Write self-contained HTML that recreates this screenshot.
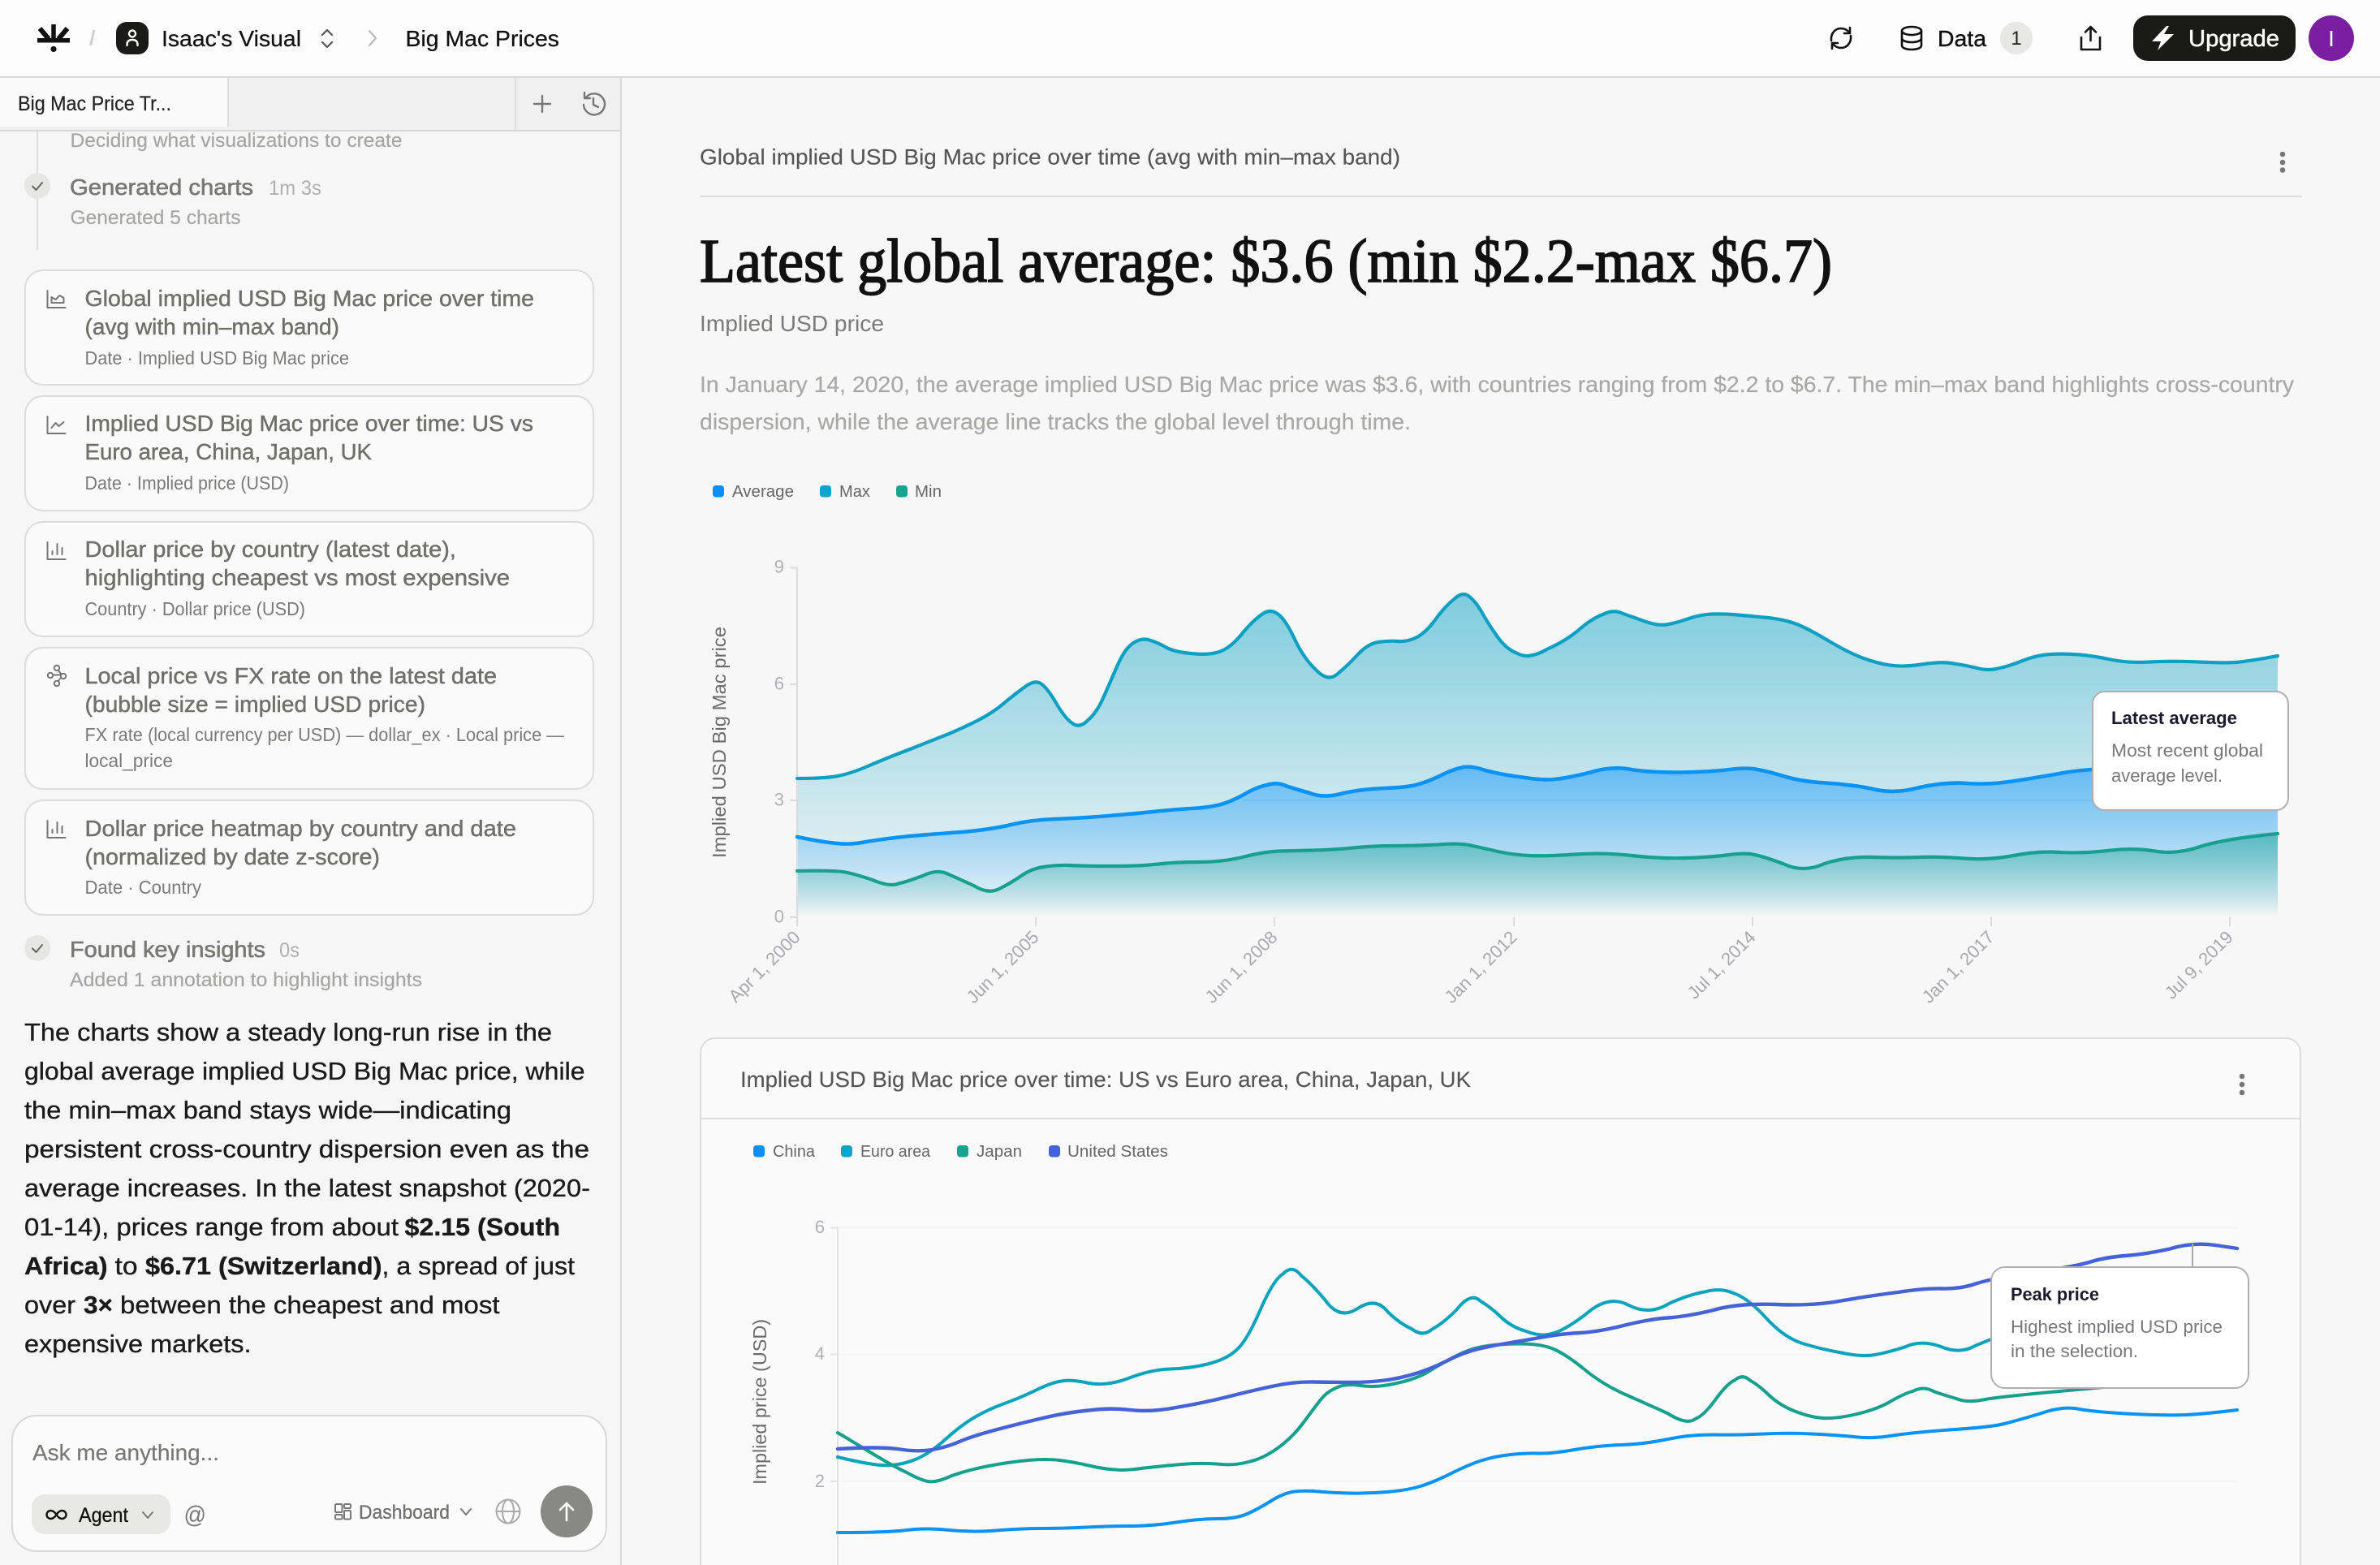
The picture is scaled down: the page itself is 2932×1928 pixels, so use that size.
<!DOCTYPE html>
<html lang="en">
<head>
<meta charset="utf-8">
<title>Big Mac Prices</title>
<style>
html,body{margin:0;padding:0;background:#f7f7f7;width:2932px;height:1928px;overflow:hidden}
svg{display:block}
text{font-family:"Liberation Sans",Arial,sans-serif;white-space:pre}
.serif{font-family:"Liberation Serif","Times New Roman",serif}
.ic{fill:none;stroke-linecap:round;stroke-linejoin:round}
</style>
</head>
<body>
<svg xmlns="http://www.w3.org/2000/svg" width="2932" height="1928" viewBox="0 0 2932 1928">
<defs>
<linearGradient id="gMax" x1="0" y1="0" x2="0" y2="1"><stop offset="0" stop-color="#06a0c4" stop-opacity=".5"/><stop offset="1" stop-color="#06a0c4" stop-opacity="0"/></linearGradient>
<linearGradient id="gAvg" x1="0" y1="0" x2="0" y2="1"><stop offset="0" stop-color="#0090ff" stop-opacity=".48"/><stop offset="1" stop-color="#0090ff" stop-opacity="0"/></linearGradient>
<linearGradient id="gMin" x1="0" y1="0" x2="0" y2="1"><stop offset="0" stop-color="#15a08f" stop-opacity=".5"/><stop offset="1" stop-color="#15a08f" stop-opacity="0"/></linearGradient>
</defs>

<rect width="2932" height="1928" fill="#f7f7f7"/>

<!-- top bar -->
<g id="topbar">
<rect width="2932" height="95" fill="#fcfcfc"/>
<rect y="94" width="2932" height="2" fill="#d8d8d8"/>
<!-- logo -->
<rect x="46" y="47" width="40" height="5.5" fill="#111"/>
<path d="M66 48V30" stroke="#111" stroke-width="5.5" fill="none"/>
<path d="M60 48L49 35" stroke="#111" stroke-width="6" fill="none"/>
<path d="M72 48L83 35" stroke="#111" stroke-width="6" fill="none"/>
<circle cx="66" cy="60.5" r="3.6" fill="#111"/>
<path d="M115.7 37L111.7 56" stroke="#cfcfcf" stroke-width="3" fill="none"/>
<rect x="143" y="27" width="40" height="40" rx="13" fill="#1a1a18"/>
<circle cx="163" cy="41.5" r="4" fill="none" stroke="#fff" stroke-width="2.4"/>
<path class="ic" d="M156.5 56V54.5C156.5 51 159 49 163 49C167 49 169.5 51 169.5 54.5V56" stroke="#fff" stroke-width="2.4"/>
<text x="199" y="57" font-size="28" fill="#111" stroke="#111" stroke-width=".25" textLength="172" lengthAdjust="spacingAndGlyphs">Isaac's Visual</text>
<path class="ic" d="M397 43L403 37L409 43M397 52L403 58L409 52" stroke="#555" stroke-width="2.2"/>
<path class="ic" d="M455 38L463 47L455 56" stroke="#bbb" stroke-width="2.2"/>
<text x="499.5" y="57" font-size="28" fill="#111" stroke="#111" stroke-width=".25" textLength="189.5" lengthAdjust="spacingAndGlyphs">Big Mac Prices</text>

<path class="ic" d="M2256 50C2255 41 2261 35 2268 35C2273 35 2276 37 2279 41M2279 34V41H2272" stroke="#111" stroke-width="2.6"/>
<path class="ic" d="M2280 44C2281 53 2275 59 2268 59C2263 59 2260 57 2257 53M2257 60V53H2264" stroke="#111" stroke-width="2.6"/>
<ellipse cx="2355" cy="38" rx="12" ry="5" fill="none" stroke="#111" stroke-width="2.6"/>
<path class="ic" d="M2343 38V56C2343 59 2348 61 2355 61C2362 61 2367 59 2367 56V38M2343 47C2343 50 2348 52 2355 52C2362 52 2367 50 2367 47" stroke="#111" stroke-width="2.6"/>
<text x="2387" y="57" font-size="28" fill="#111" stroke="#111" stroke-width=".4" textLength="60" lengthAdjust="spacingAndGlyphs">Data</text>
<circle cx="2484" cy="47" r="20" fill="#e7e7e5"/>
<text x="2484" y="55" font-size="24" fill="#222" text-anchor="middle">1</text>
<path class="ic" d="M2564 46V61H2587V46M2575.5 50V33M2569 39.5L2575.5 33L2582 39.5" stroke="#111" stroke-width="2.6"/>
<rect x="2628" y="19" width="200" height="56" rx="18" fill="#1a1a18"/>
<path d="M2669 32L2651 51H2662L2658 62L2678 42H2666L2672 32Z" fill="#fff"/>
<text x="2696" y="57" font-size="29" fill="#fff" stroke="#fff" stroke-width=".5" textLength="112" lengthAdjust="spacingAndGlyphs">Upgrade</text>
<circle cx="2872" cy="47" r="28" fill="#7b1fa2"/>
<text x="2872" y="57" font-size="28" fill="#fff" text-anchor="middle">I</text>
</g>

<!-- sidebar -->
<g id="sidebar">
<rect y="96" width="765" height="1832" fill="#f6f6f6"/>
<rect x="764" y="96" width="2" height="1832" fill="#d8d8d8"/>
<rect y="96" width="764" height="65" fill="#f0f0f0"/>
<rect y="96" width="280" height="60" fill="#fafafa"/>
<rect x="280" y="96" width="2" height="60" fill="#dedede"/>
<rect x="634" y="96" width="2" height="65" fill="#dcdcdc"/>
<rect y="160" width="764" height="2" fill="#d8d8d8"/>
<text x="22" y="136" font-size="25" fill="#222" stroke="#222" stroke-width=".2" textLength="189" lengthAdjust="spacingAndGlyphs">Big Mac Price Tr...</text>
<path class="ic" d="M668 118V138M658 128H678" stroke="#777" stroke-width="2.4"/>
<path class="ic" d="M722 120A13 13 0 1 1 719 129M720 114V121H727M731 121V129L737 132" stroke="#777" stroke-width="2.4"/>

<rect x="45" y="162" width="2" height="146" fill="#dcdcdc"/>
<text x="86.5" y="181" font-size="24" fill="#a5a5a3" stroke="#a5a5a3" stroke-width=".2" textLength="409" lengthAdjust="spacingAndGlyphs">Deciding what visualizations to create</text>
<circle cx="46" cy="229" r="16" fill="#e6e6e4"/>
<path class="ic" d="M40 229.5L44.5 234L52 225" stroke="#666" stroke-width="2"/>
<text x="86" y="240" font-size="28" fill="#777775" stroke="#777775" stroke-width=".6" textLength="226" lengthAdjust="spacingAndGlyphs">Generated charts</text>
<text x="331" y="240" font-size="25" fill="#b0b0ae" textLength="65" lengthAdjust="spacingAndGlyphs">1m 3s</text>
<text x="86.5" y="276" font-size="24" fill="#a5a5a3" stroke="#a5a5a3" stroke-width=".2" textLength="210" lengthAdjust="spacingAndGlyphs">Generated 5 charts</text>

<g fill="#fafafa" stroke="#dcdcdc" stroke-width="2">
<rect x="31" y="333" width="700" height="141" rx="22"/>
<rect x="31" y="488" width="700" height="141" rx="22"/>
<rect x="31" y="643" width="700" height="141" rx="22"/>
<rect x="31" y="798" width="700" height="174" rx="22"/>
<rect x="31" y="986" width="700" height="141" rx="22"/>
</g>

<path class="ic" d="M58.5 358V379H80.5M63.5 373V366L68.5 369L73.5 364L78.5 367V373Z" stroke="#777" stroke-width="2"/>
<path class="ic" d="M58.5 513V534H80.5M63.5 527L68.5 521L72.5 525L78.5 520" stroke="#777" stroke-width="2"/>
<path class="ic" d="M58.5 668V689H80.5M64.5 683V679M70.5 683V670M76.5 683V675" stroke="#777" stroke-width="2"/>
<g class="ic" stroke="#777" stroke-width="2"><circle cx="70" cy="823" r="3.2"/><circle cx="62" cy="832" r="3.2"/><circle cx="78" cy="833" r="3.2"/><circle cx="70" cy="842" r="3.2"/><path d="M65.5 831.5H74M72 826L75 830M74 836L72 839"/></g>
<path class="ic" d="M58.5 1011V1032H80.5M64.5 1026V1022M70.5 1026V1013M76.5 1026V1018" stroke="#777" stroke-width="2"/>

<g font-size="28" fill="#6f6f6c" stroke="#6f6f6c" stroke-width=".45">
<text x="104.5" y="377" textLength="553.5" lengthAdjust="spacingAndGlyphs">Global implied USD Big Mac price over time</text>
<text x="104.5" y="412" textLength="313.5" lengthAdjust="spacingAndGlyphs">(avg with min–max band)</text>
<text x="104.5" y="531" textLength="552.5" lengthAdjust="spacingAndGlyphs">Implied USD Big Mac price over time: US vs</text>
<text x="104.5" y="566" textLength="353.5" lengthAdjust="spacingAndGlyphs">Euro area, China, Japan, UK</text>
<text x="104.5" y="686" textLength="457.5" lengthAdjust="spacingAndGlyphs">Dollar price by country (latest date),</text>
<text x="104.5" y="721" textLength="523.5" lengthAdjust="spacingAndGlyphs">highlighting cheapest vs most expensive</text>
<text x="104.5" y="842" textLength="507.5" lengthAdjust="spacingAndGlyphs">Local price vs FX rate on the latest date</text>
<text x="104.5" y="877" textLength="419.5" lengthAdjust="spacingAndGlyphs">(bubble size = implied USD price)</text>
<text x="104.5" y="1030" textLength="531.5" lengthAdjust="spacingAndGlyphs">Dollar price heatmap by country and date</text>
<text x="104.5" y="1065" textLength="363.5" lengthAdjust="spacingAndGlyphs">(normalized by date z-score)</text>
</g>
<g font-size="23" fill="#7a7a78">
<text x="104.5" y="449" textLength="325.5" lengthAdjust="spacingAndGlyphs">Date · Implied USD Big Mac price</text>
<text x="104.5" y="603" textLength="251.5" lengthAdjust="spacingAndGlyphs">Date · Implied price (USD)</text>
<text x="104.5" y="758" textLength="271.5" lengthAdjust="spacingAndGlyphs">Country · Dollar price (USD)</text>
<text x="104.5" y="913" textLength="590.5" lengthAdjust="spacingAndGlyphs">FX rate (local currency per USD) — dollar_ex · Local price —</text>
<text x="104.5" y="945" textLength="108.5" lengthAdjust="spacingAndGlyphs">local_price</text>
<text x="104.5" y="1101" textLength="143.5" lengthAdjust="spacingAndGlyphs">Date · Country</text>
</g>

<circle cx="46" cy="1168" r="16" fill="#e6e6e4"/>
<path class="ic" d="M40 1168.5L44.5 1173L52 1164" stroke="#666" stroke-width="2"/>
<text x="86" y="1179" font-size="28" fill="#777775" stroke="#777775" stroke-width=".6" textLength="241" lengthAdjust="spacingAndGlyphs">Found key insights</text>
<text x="344" y="1179" font-size="25" fill="#b0b0ae" textLength="25" lengthAdjust="spacingAndGlyphs">0s</text>
<text x="86" y="1215" font-size="24" fill="#a5a5a3" stroke="#a5a5a3" stroke-width=".2" textLength="434" lengthAdjust="spacingAndGlyphs">Added 1 annotation to highlight insights</text>

<g font-size="31" fill="#1a1a1a" stroke="#1a1a1a" stroke-width=".35">
<text x="30" y="1282" textLength="650" lengthAdjust="spacingAndGlyphs">The charts show a steady long-run rise in the</text>
<text x="30" y="1330" textLength="690.5" lengthAdjust="spacingAndGlyphs">global average implied USD Big Mac price, while</text>
<text x="30" y="1378" textLength="600" lengthAdjust="spacingAndGlyphs">the min–max band stays wide—indicating</text>
<text x="30" y="1426" textLength="696" lengthAdjust="spacingAndGlyphs">persistent cross-country dispersion even as the</text>
<text x="30" y="1474" textLength="697" lengthAdjust="spacingAndGlyphs">average increases. In the latest snapshot (2020-</text>
<text x="30" y="1522" textLength="461" lengthAdjust="spacingAndGlyphs">01-14), prices range from about</text>
<text x="498.5" y="1522" font-weight="700" textLength="191.5" lengthAdjust="spacingAndGlyphs">$2.15 (South</text>
<text x="30" y="1570" font-weight="700" textLength="102.5" lengthAdjust="spacingAndGlyphs">Africa)</text>
<text x="141.5" y="1570" textLength="28" lengthAdjust="spacingAndGlyphs">to</text>
<text x="179" y="1570" font-weight="700" textLength="291.5" lengthAdjust="spacingAndGlyphs">$6.71 (Switzerland)</text>
<text x="470.5" y="1570" textLength="237.5" lengthAdjust="spacingAndGlyphs">, a spread of just</text>
<text x="30" y="1618" textLength="63" lengthAdjust="spacingAndGlyphs">over</text>
<text x="103" y="1618" font-weight="700" textLength="36" lengthAdjust="spacingAndGlyphs">3×</text>
<text x="148" y="1618" textLength="467.5" lengthAdjust="spacingAndGlyphs">between the cheapest and most</text>
<text x="30" y="1666" textLength="279.5" lengthAdjust="spacingAndGlyphs">expensive markets.</text>
</g>

<!-- input -->
<rect x="15" y="1744" width="732" height="167" rx="30" fill="#fbfbfb" stroke="#d8d8d8" stroke-width="2"/>
<text x="40" y="1799" font-size="28" fill="#777775" stroke="#777775" stroke-width=".2" textLength="230" lengthAdjust="spacingAndGlyphs">Ask me anything...</text>
<rect x="39" y="1841" width="171" height="49" rx="16" fill="#e8e8e6"/>
<path class="ic" d="M69.5 1866C67 1862 64 1861 62.5 1861A5 5 0 0 0 62.5 1871C64 1871 67 1870 69.5 1866C72 1862 75 1861 76.5 1861A5 5 0 0 1 76.5 1871C75 1871 72 1870 69.5 1866Z" stroke="#111" stroke-width="2.4"/>
<text x="97" y="1875" font-size="25" fill="#111" stroke="#111" stroke-width=".3" textLength="61" lengthAdjust="spacingAndGlyphs">Agent</text>
<path class="ic" d="M176 1863L182 1870L188 1863" stroke="#777" stroke-width="2"/>
<text x="226.5" y="1876" font-size="30" fill="#777" textLength="27.5" lengthAdjust="spacingAndGlyphs">@</text>
<g fill="none" stroke="#777" stroke-width="2"><rect x="413" y="1853" width="8.5" height="10" rx="1.2"/><rect x="424" y="1853" width="8" height="5" rx="1.2"/><rect x="413" y="1866" width="8.5" height="5.5" rx="1.2"/><rect x="424" y="1861" width="8" height="10.5" rx="1.2"/></g>
<text x="442" y="1871" font-size="24" fill="#6f6f6d" stroke="#6f6f6d" stroke-width=".3" textLength="112" lengthAdjust="spacingAndGlyphs">Dashboard</text>
<path class="ic" d="M568 1859L574 1866L580 1859" stroke="#777" stroke-width="2"/>
<g fill="none" stroke="#aaa" stroke-width="2"><circle cx="626" cy="1862" r="14.5"/><ellipse cx="626" cy="1862" rx="7" ry="14.5"/><path d="M611.5 1862H640.5"/></g>
<circle cx="698" cy="1862" r="32" fill="#888886"/>
<path class="ic" d="M698 1873V1852M690 1860L698 1852L706 1860" stroke="#fff" stroke-width="2.6"/>
</g>

<!-- chart 1 -->
<g id="chart1">
<text x="862" y="202.5" font-size="27" fill="#555" stroke="#555" stroke-width=".15" textLength="863" lengthAdjust="spacingAndGlyphs">Global implied USD Big Mac price over time (avg with min–max band)</text>
<g fill="#777"><circle cx="2812" cy="190" r="3.3"/><circle cx="2812" cy="200" r="3.3"/><circle cx="2812" cy="209.5" r="3.3"/></g>
<rect x="862" y="241" width="1974" height="2" fill="#dcdcdc"/>
<text class="serif" x="862" y="347" font-size="76" fill="#111" stroke="#111" stroke-width="1.7" textLength="1395" lengthAdjust="spacingAndGlyphs">Latest global average: $3.6 (min $2.2-max $6.7)</text>
<text x="862" y="408" font-size="28" fill="#7a7a78" textLength="227" lengthAdjust="spacingAndGlyphs">Implied USD price</text>
<text x="862" y="483" font-size="27.5" fill="#a8a8a6" stroke="#a8a8a6" stroke-width=".2" textLength="1964" lengthAdjust="spacingAndGlyphs">In January 14, 2020, the average implied USD Big Mac price was $3.6, with countries ranging from $2.2 to $6.7. The min–max band highlights cross-country</text>
<text x="862" y="529" font-size="27.5" fill="#a8a8a6" stroke="#a8a8a6" stroke-width=".2" textLength="876" lengthAdjust="spacingAndGlyphs">dispersion, while the average line tracks the global level through time.</text>

<rect x="878" y="598" width="14" height="14.5" rx="4" fill="#0a8fff"/>
<text x="902" y="612" font-size="20" fill="#666" textLength="76" lengthAdjust="spacingAndGlyphs">Average</text>
<rect x="1010" y="598" width="14" height="14.5" rx="4" fill="#0ea5cc"/>
<text x="1034" y="612" font-size="20" fill="#666" textLength="38" lengthAdjust="spacingAndGlyphs">Max</text>
<rect x="1104" y="598" width="14" height="14.5" rx="4" fill="#18a38f"/>
<text x="1127" y="612" font-size="20" fill="#666" textLength="33" lengthAdjust="spacingAndGlyphs">Min</text>

<path fill="url(#gMax)" d="M982 959Q1016 959 1032 956Q1048 953 1070 943.5Q1092 934 1121 923Q1150 911.5 1169 904Q1188 896 1205.5 887Q1223 878 1236 867Q1249 856 1261.5 847Q1274 837 1282 842Q1290 847 1301 866Q1312 885 1321 891Q1330 898 1340.5 887Q1351 878 1359 860Q1367 842 1376.5 820Q1386 798 1397 791.5Q1408 785 1417.5 789Q1427 792 1436.5 797.5Q1446 803 1467 805Q1488 807.5 1502 803Q1516 798 1529 782Q1542 766 1553 758Q1564 749 1573.5 756Q1583 762 1594.5 786.5Q1606 811 1621 825Q1636 841 1648 830Q1660 820 1672.5 806.5Q1685 793 1698 791Q1711 789 1722 790Q1733 791 1744.5 785.5Q1756 780 1768.5 763Q1781 746 1791.5 738Q1802 728 1810 735Q1818 741 1826.5 756Q1835 771 1845.5 785.5Q1856 800 1869.5 805Q1883 813 1906.5 799.5Q1930 789 1945.5 775.5Q1961 762 1974.5 757Q1988 750 1999.5 756Q2011 760 2026.5 765.5Q2042 771 2052.5 769.5Q2063 768 2079 762.5Q2095 757 2109 756.5Q2123 756 2140.5 757.5Q2158 759 2177.5 761Q2197 763 2211 768Q2225 773 2251 788.5Q2277 804 2294.5 810.5Q2312 817 2328 819.5Q2344 822 2367 818.5Q2390 815 2404 817Q2418 819 2433.5 822.5Q2449 827 2461.5 823.5Q2474 821 2491.5 814Q2509 807 2526.5 806Q2544 805 2561.5 806.5Q2579 808 2600 812.5Q2621 817 2649 815.5Q2677 814 2708.5 815.5Q2740 817 2754 816Q2768 815 2806 808L2806 1130L982 1130Z"/>
<path fill="url(#gAvg)" d="M982 1031Q1016 1038 1032 1039Q1048 1041 1070 1036.5Q1092 1033 1121 1030Q1150 1027.5 1185 1025Q1220 1022 1245.5 1016Q1271 1010 1299.5 1009Q1328 1008 1360 1005.5Q1392 1003 1420.5 1000Q1449 997 1468.5 996Q1488 995 1502 991.5Q1516 988 1532 979Q1548 969.5 1561 967Q1574 963 1585 968.5Q1596 972 1613.5 977Q1631 984 1655 977Q1679 972 1706 971Q1733 970 1746 966.5Q1759 963 1773.5 956Q1788 948.5 1799 946Q1810 942 1831.5 949.5Q1853 955 1879 958Q1905 962 1919 959.5Q1933 958 1959.5 951.5Q1986 943 2012.5 948.5Q2039 952 2070.5 951.5Q2102 951 2126.5 948.5Q2151 945 2165 948Q2179 950.5 2200 957Q2221 963 2249 964.5Q2277 966 2305 971.5Q2333 979 2365 970Q2397 963 2423 965Q2449 967 2479 962.5Q2509 958 2537 953Q2565 947.5 2603.5 947Q2642 947 2724 945.5Q2765 944 2806 944L2806 1130L982 1130Z"/>
<path fill="url(#gMin)" d="M982 1073Q1029 1072 1041.5 1074.5Q1054 1077 1075 1084Q1096 1093 1107 1088.5Q1118 1086 1136.5 1079Q1155 1070 1168.5 1077Q1182 1083 1199.5 1091Q1217 1102 1231 1095Q1245 1088 1258 1079Q1271 1070 1285.5 1068Q1300 1065.5 1317.5 1066Q1335 1067 1370 1067Q1405 1067 1427 1064.5Q1449 1062 1478 1062Q1507 1062 1532.5 1055.5Q1558 1049 1577 1048.5Q1596 1048 1618.5 1047.5Q1641 1047 1666.5 1044.5Q1692 1042 1717.5 1042Q1743 1042 1771.5 1040.5Q1800 1038 1814 1042Q1828 1045 1845.5 1049Q1863 1053 1884 1054Q1905 1055 1940 1052.5Q1975 1050 2010.5 1054Q2046 1058 2074 1057Q2102 1056.5 2126.5 1053.5Q2151 1050 2161.5 1053Q2172 1055 2196.5 1064Q2221 1076 2247.5 1064Q2274 1055 2307 1056Q2340 1057 2365 1056Q2390 1055 2419.5 1057.5Q2449 1060 2480.5 1054Q2512 1048 2538.5 1050Q2565 1051.5 2596.5 1048Q2628 1044 2654.5 1048.5Q2681 1053 2710.5 1043Q2740 1033.5 2806 1027L2806 1130L982 1130Z"/>

<path d="M1368 843H2806" stroke="#8fd6de" stroke-opacity=".4" stroke-width="2" fill="none"/>
<path d="M1530 986H2806" stroke="#62bce8" stroke-opacity=".5" stroke-width="2" fill="none"/>
<path d="M982 699V1130M973 699.5H982M973 843H982M973 986H982M973 1130H982M982 1130V1141M1276 1130V1141M1570 1130V1141M1865 1130V1141M2159 1130V1141M2453 1130V1141M2747 1130V1141" stroke="#dcdcdc" stroke-width="2" fill="none"/>

<path fill="none" stroke="#0ea0c2" stroke-width="4.2" stroke-linecap="round" d="M982 959Q1016 959 1032 956Q1048 953 1070 943.5Q1092 934 1121 923Q1150 911.5 1169 904Q1188 896 1205.5 887Q1223 878 1236 867Q1249 856 1261.5 847Q1274 837 1282 842Q1290 847 1301 866Q1312 885 1321 891Q1330 898 1340.5 887Q1351 878 1359 860Q1367 842 1376.5 820Q1386 798 1397 791.5Q1408 785 1417.5 789Q1427 792 1436.5 797.5Q1446 803 1467 805Q1488 807.5 1502 803Q1516 798 1529 782Q1542 766 1553 758Q1564 749 1573.5 756Q1583 762 1594.5 786.5Q1606 811 1621 825Q1636 841 1648 830Q1660 820 1672.5 806.5Q1685 793 1698 791Q1711 789 1722 790Q1733 791 1744.5 785.5Q1756 780 1768.5 763Q1781 746 1791.5 738Q1802 728 1810 735Q1818 741 1826.5 756Q1835 771 1845.5 785.5Q1856 800 1869.5 805Q1883 813 1906.5 799.5Q1930 789 1945.5 775.5Q1961 762 1974.5 757Q1988 750 1999.5 756Q2011 760 2026.5 765.5Q2042 771 2052.5 769.5Q2063 768 2079 762.5Q2095 757 2109 756.5Q2123 756 2140.5 757.5Q2158 759 2177.5 761Q2197 763 2211 768Q2225 773 2251 788.5Q2277 804 2294.5 810.5Q2312 817 2328 819.5Q2344 822 2367 818.5Q2390 815 2404 817Q2418 819 2433.5 822.5Q2449 827 2461.5 823.5Q2474 821 2491.5 814Q2509 807 2526.5 806Q2544 805 2561.5 806.5Q2579 808 2600 812.5Q2621 817 2649 815.5Q2677 814 2708.5 815.5Q2740 817 2754 816Q2768 815 2806 808"/>
<path fill="none" stroke="#0a93f5" stroke-width="4.6" stroke-linecap="round" d="M982 1031Q1016 1038 1032 1039Q1048 1041 1070 1036.5Q1092 1033 1121 1030Q1150 1027.5 1185 1025Q1220 1022 1245.5 1016Q1271 1010 1299.5 1009Q1328 1008 1360 1005.5Q1392 1003 1420.5 1000Q1449 997 1468.5 996Q1488 995 1502 991.5Q1516 988 1532 979Q1548 969.5 1561 967Q1574 963 1585 968.5Q1596 972 1613.5 977Q1631 984 1655 977Q1679 972 1706 971Q1733 970 1746 966.5Q1759 963 1773.5 956Q1788 948.5 1799 946Q1810 942 1831.5 949.5Q1853 955 1879 958Q1905 962 1919 959.5Q1933 958 1959.5 951.5Q1986 943 2012.5 948.5Q2039 952 2070.5 951.5Q2102 951 2126.5 948.5Q2151 945 2165 948Q2179 950.5 2200 957Q2221 963 2249 964.5Q2277 966 2305 971.5Q2333 979 2365 970Q2397 963 2423 965Q2449 967 2479 962.5Q2509 958 2537 953Q2565 947.5 2603.5 947Q2642 947 2724 945.5Q2765 944 2806 944"/>
<path fill="none" stroke="#17a08e" stroke-width="4.2" stroke-linecap="round" d="M982 1073Q1029 1072 1041.5 1074.5Q1054 1077 1075 1084Q1096 1093 1107 1088.5Q1118 1086 1136.5 1079Q1155 1070 1168.5 1077Q1182 1083 1199.5 1091Q1217 1102 1231 1095Q1245 1088 1258 1079Q1271 1070 1285.5 1068Q1300 1065.5 1317.5 1066Q1335 1067 1370 1067Q1405 1067 1427 1064.5Q1449 1062 1478 1062Q1507 1062 1532.5 1055.5Q1558 1049 1577 1048.5Q1596 1048 1618.5 1047.5Q1641 1047 1666.5 1044.5Q1692 1042 1717.5 1042Q1743 1042 1771.5 1040.5Q1800 1038 1814 1042Q1828 1045 1845.5 1049Q1863 1053 1884 1054Q1905 1055 1940 1052.5Q1975 1050 2010.5 1054Q2046 1058 2074 1057Q2102 1056.5 2126.5 1053.5Q2151 1050 2161.5 1053Q2172 1055 2196.5 1064Q2221 1076 2247.5 1064Q2274 1055 2307 1056Q2340 1057 2365 1056Q2390 1055 2419.5 1057.5Q2449 1060 2480.5 1054Q2512 1048 2538.5 1050Q2565 1051.5 2596.5 1048Q2628 1044 2654.5 1048.5Q2681 1053 2710.5 1043Q2740 1033.5 2806 1027"/>

<g font-size="22" fill="#b0b0b4" text-anchor="end">
<text x="966" y="705.5">9</text><text x="966" y="849.5">6</text><text x="966" y="992.5">3</text><text x="966" y="1136.5">0</text>
</g>
<g font-size="22" fill="#a8a8ad" text-anchor="end">
<text transform="translate(987 1156) rotate(-45)">Apr 1, 2000</text>
<text transform="translate(1281 1156) rotate(-45)">Jun 1, 2005</text>
<text transform="translate(1575 1156) rotate(-45)">Jun 1, 2008</text>
<text transform="translate(1870 1156) rotate(-45)">Jan 1, 2012</text>
<text transform="translate(2164 1156) rotate(-45)">Jul 1, 2014</text>
<text transform="translate(2458 1156) rotate(-45)">Jan 1, 2017</text>
<text transform="translate(2752 1156) rotate(-45)">Jul 9, 2019</text>
</g>
<text transform="translate(894 1057) rotate(-90)" font-size="23" fill="#6b6b6b" textLength="285" lengthAdjust="spacingAndGlyphs">Implied USD Big Mac price</text>

<rect x="2578" y="852" width="241" height="146" rx="15" fill="#fff" stroke="#b0b0b0" stroke-width="2"/>
<text x="2601" y="892" font-size="22" fill="#1a1a2a" font-weight="700" textLength="155" lengthAdjust="spacingAndGlyphs">Latest average</text>
<text x="2601" y="932" font-size="22" fill="#77777e" textLength="187" lengthAdjust="spacingAndGlyphs">Most recent global</text>
<text x="2601" y="963" font-size="22" fill="#77777e" textLength="137" lengthAdjust="spacingAndGlyphs">average level.</text>
</g>

<!-- chart 2 -->
<g id="chart2">
<rect x="863" y="1279" width="1971" height="700" rx="18" fill="#fafafa" stroke="#dcdcdc" stroke-width="2"/>
<rect x="864" y="1377" width="1970" height="2" fill="#dcdcdc"/>
<text x="912" y="1339" font-size="27" fill="#555" stroke="#555" stroke-width=".15" textLength="900" lengthAdjust="spacingAndGlyphs">Implied USD Big Mac price over time: US vs Euro area, China, Japan, UK</text>
<g fill="#777"><circle cx="2762" cy="1326" r="3.3"/><circle cx="2762" cy="1336" r="3.3"/><circle cx="2762" cy="1346" r="3.3"/></g>

<rect x="928" y="1411" width="14" height="14.5" rx="4" fill="#0a8fff"/>
<text x="952" y="1425" font-size="20" fill="#666" textLength="52" lengthAdjust="spacingAndGlyphs">China</text>
<rect x="1036" y="1411" width="14" height="14.5" rx="4" fill="#0ea5cc"/>
<text x="1060" y="1425" font-size="20" fill="#666" textLength="86" lengthAdjust="spacingAndGlyphs">Euro area</text>
<rect x="1179" y="1411" width="14" height="14.5" rx="4" fill="#18a38f"/>
<text x="1203" y="1425" font-size="20" fill="#666" textLength="56" lengthAdjust="spacingAndGlyphs">Japan</text>
<rect x="1292" y="1411" width="14" height="14.5" rx="4" fill="#4561dc"/>
<text x="1315" y="1425" font-size="20" fill="#666" textLength="124" lengthAdjust="spacingAndGlyphs">United States</text>

<path d="M1032 1512.5H2756M1032 1668.5H2756M1032 1825H2756" stroke="#f4f4f4" stroke-width="2" fill="none"/>
<path d="M1032 1512V1928M1023 1512.5H1032M1023 1668.5H1032M1023 1825H1032" stroke="#e2e2e2" stroke-width="2" fill="none"/>
<g font-size="22" fill="#b0b0b4" text-anchor="end">
<text x="1016" y="1519">6</text><text x="1016" y="1675">4</text><text x="1016" y="1832">2</text>
</g>
<text transform="translate(944 1829) rotate(-90)" font-size="23" fill="#6b6b6b" textLength="204" lengthAdjust="spacingAndGlyphs">Implied price (USD)</text>

<g fill="none" stroke-linecap="round" stroke-width="4">
<path stroke="#0a93f5" d="M1032 1888Q1094 1888 1117 1885Q1140 1882 1169 1885Q1198 1888 1227.5 1885.5Q1257 1883 1283 1883Q1309 1883 1338 1881.5Q1367 1880 1393 1880Q1419 1880 1448.5 1875.5Q1478 1871 1500.5 1871Q1523 1871 1536.5 1865Q1550 1859 1566 1849Q1582 1839 1595 1837.5Q1608 1836 1624.5 1837.5Q1641 1839 1663.5 1839.5Q1686 1840 1709 1838Q1732 1836 1748 1831.5Q1764 1827 1787 1815.5Q1810 1804 1826 1799Q1842 1794 1861 1792Q1880 1790 1895.5 1790.5Q1911 1791 1939.5 1786Q1968 1781 1997 1780Q2026 1779 2054.5 1773Q2083 1767 2112 1767.5Q2141 1768 2172.5 1766.5Q2204 1765 2233 1766.5Q2262 1768 2284 1770Q2306 1773 2335 1768Q2364 1764 2408.5 1761Q2453 1758 2469 1754Q2485 1750 2513.5 1741.5Q2542 1731 2564.5 1736.5Q2587 1740 2628.5 1742Q2670 1744 2692.5 1743Q2715 1742 2756 1737"/>
<path stroke="#0ea3bd" d="M1032 1795Q1081 1807 1097.5 1805Q1114 1804 1130 1797Q1146 1790 1165.5 1772.5Q1185 1755 1201.5 1745.5Q1218 1736 1237.5 1729Q1257 1722 1276.5 1712.5Q1296 1703 1307.5 1701.5Q1319 1699 1341.5 1704Q1364 1708 1391.5 1697.5Q1419 1687 1442 1686.5Q1465 1686 1487.5 1680.5Q1510 1675 1523 1663.5Q1536 1652 1552.5 1614Q1569 1576 1580.5 1569.5Q1592 1557 1603 1571.5Q1614 1580 1632 1601Q1650 1627 1672.5 1612Q1695 1597 1710 1616.5Q1725 1631 1739 1637Q1753 1648 1765 1637Q1777 1631 1794.5 1613.5Q1812 1591 1824 1603Q1836 1610 1849 1622.5Q1862 1635 1880 1640Q1898 1647 1911 1643Q1924 1641 1952.5 1620Q1981 1594 2006.5 1608Q2032 1621 2056 1606Q2080 1595 2100 1591.5Q2120 1586 2136.5 1593.5Q2153 1599 2175.5 1623.5Q2198 1648 2220.5 1655Q2243 1662 2268.5 1666.5Q2294 1672 2310 1669Q2326 1666 2346.5 1659.5Q2367 1650 2391 1659Q2415 1669 2434 1657.5Q2453 1650 2507.5 1628Q2562 1606 2756 1585"/>
<path stroke="#17a08e" d="M1032 1765L1062 1783Q1101 1807 1117 1814Q1133 1823 1143 1825Q1153 1827 1172.5 1818Q1192 1811 1218 1806Q1244 1801 1266.5 1799Q1289 1797 1305.5 1799Q1322 1801 1341.5 1805.5Q1361 1810 1374 1810.5Q1387 1812 1409.5 1808.5Q1432 1806 1455 1804Q1478 1802 1499 1803.5Q1520 1806 1538 1801Q1556 1797 1574 1784Q1592 1771 1605 1753.5Q1618 1736 1626 1725.5Q1634 1715 1645.5 1710Q1657 1704 1676.5 1707Q1696 1710 1720.5 1704Q1745 1699 1761 1689Q1777 1679 1793.5 1670.5Q1810 1662 1826 1659Q1842 1656 1870 1655.5Q1898 1655 1914 1662Q1930 1669 1952.5 1687.5Q1975 1706 2003.5 1718.5Q2032 1731 2055 1741.5Q2078 1756 2088.5 1748Q2099 1744 2113.5 1724Q2128 1704 2137.5 1700Q2147 1692 2156.5 1701Q2166 1706 2179 1718.5Q2192 1731 2211 1738.5Q2230 1746 2246 1747Q2262 1748 2287.5 1742Q2313 1736 2329 1726.5Q2345 1717 2357.5 1713.5Q2370 1707 2383 1714.5Q2396 1719 2410 1723Q2424 1729 2448 1723.5Q2472 1720 2526.5 1715Q2581 1710 2756 1694"/>
<path stroke="#4562d8" stroke-width="4.4" d="M1032 1785Q1081 1782 1105.5 1785Q1130 1789 1148 1786Q1166 1783 1182 1776Q1198 1769 1230.5 1760.5Q1263 1752 1289 1746Q1315 1740 1341 1737.5Q1367 1734 1393 1737Q1419 1740 1451.5 1733.5Q1484 1728 1513.5 1720.5Q1543 1713 1569 1707.5Q1595 1702 1618 1702.5Q1641 1703 1663.5 1703Q1686 1703 1705.5 1700.5Q1725 1698 1744.5 1692Q1764 1686 1783.5 1676Q1803 1666 1822.5 1661.5Q1842 1657 1861 1654Q1880 1651 1902 1647Q1924 1643 1946 1642Q1968 1641 2000 1633Q2032 1625 2054.5 1623.5Q2077 1622 2109 1614.5Q2141 1605 2188.5 1607Q2236 1609 2271 1602Q2306 1596 2338 1592Q2370 1587 2392.5 1587.5Q2415 1588 2434 1581.5Q2453 1575 2505.5 1567.5Q2558 1560 2575.5 1554.5Q2593 1549 2618.5 1547Q2644 1545 2673 1538.5Q2702 1530 2729 1534L2756 1538"/>
</g>

<path d="M2701 1532V1561" stroke="#aaa" stroke-width="2" fill="none"/>
<rect x="2453" y="1561" width="317" height="149" rx="17" fill="#fff" stroke="#b0b0b0" stroke-width="2"/>
<text x="2477" y="1602" font-size="22" fill="#1a1a2a" font-weight="700" textLength="109" lengthAdjust="spacingAndGlyphs">Peak price</text>
<text x="2477" y="1642" font-size="22" fill="#77777e" textLength="261" lengthAdjust="spacingAndGlyphs">Highest implied USD price</text>
<text x="2477" y="1672" font-size="22" fill="#77777e" textLength="157" lengthAdjust="spacingAndGlyphs">in the selection.</text>
</g>
</svg>
</body>
</html>
